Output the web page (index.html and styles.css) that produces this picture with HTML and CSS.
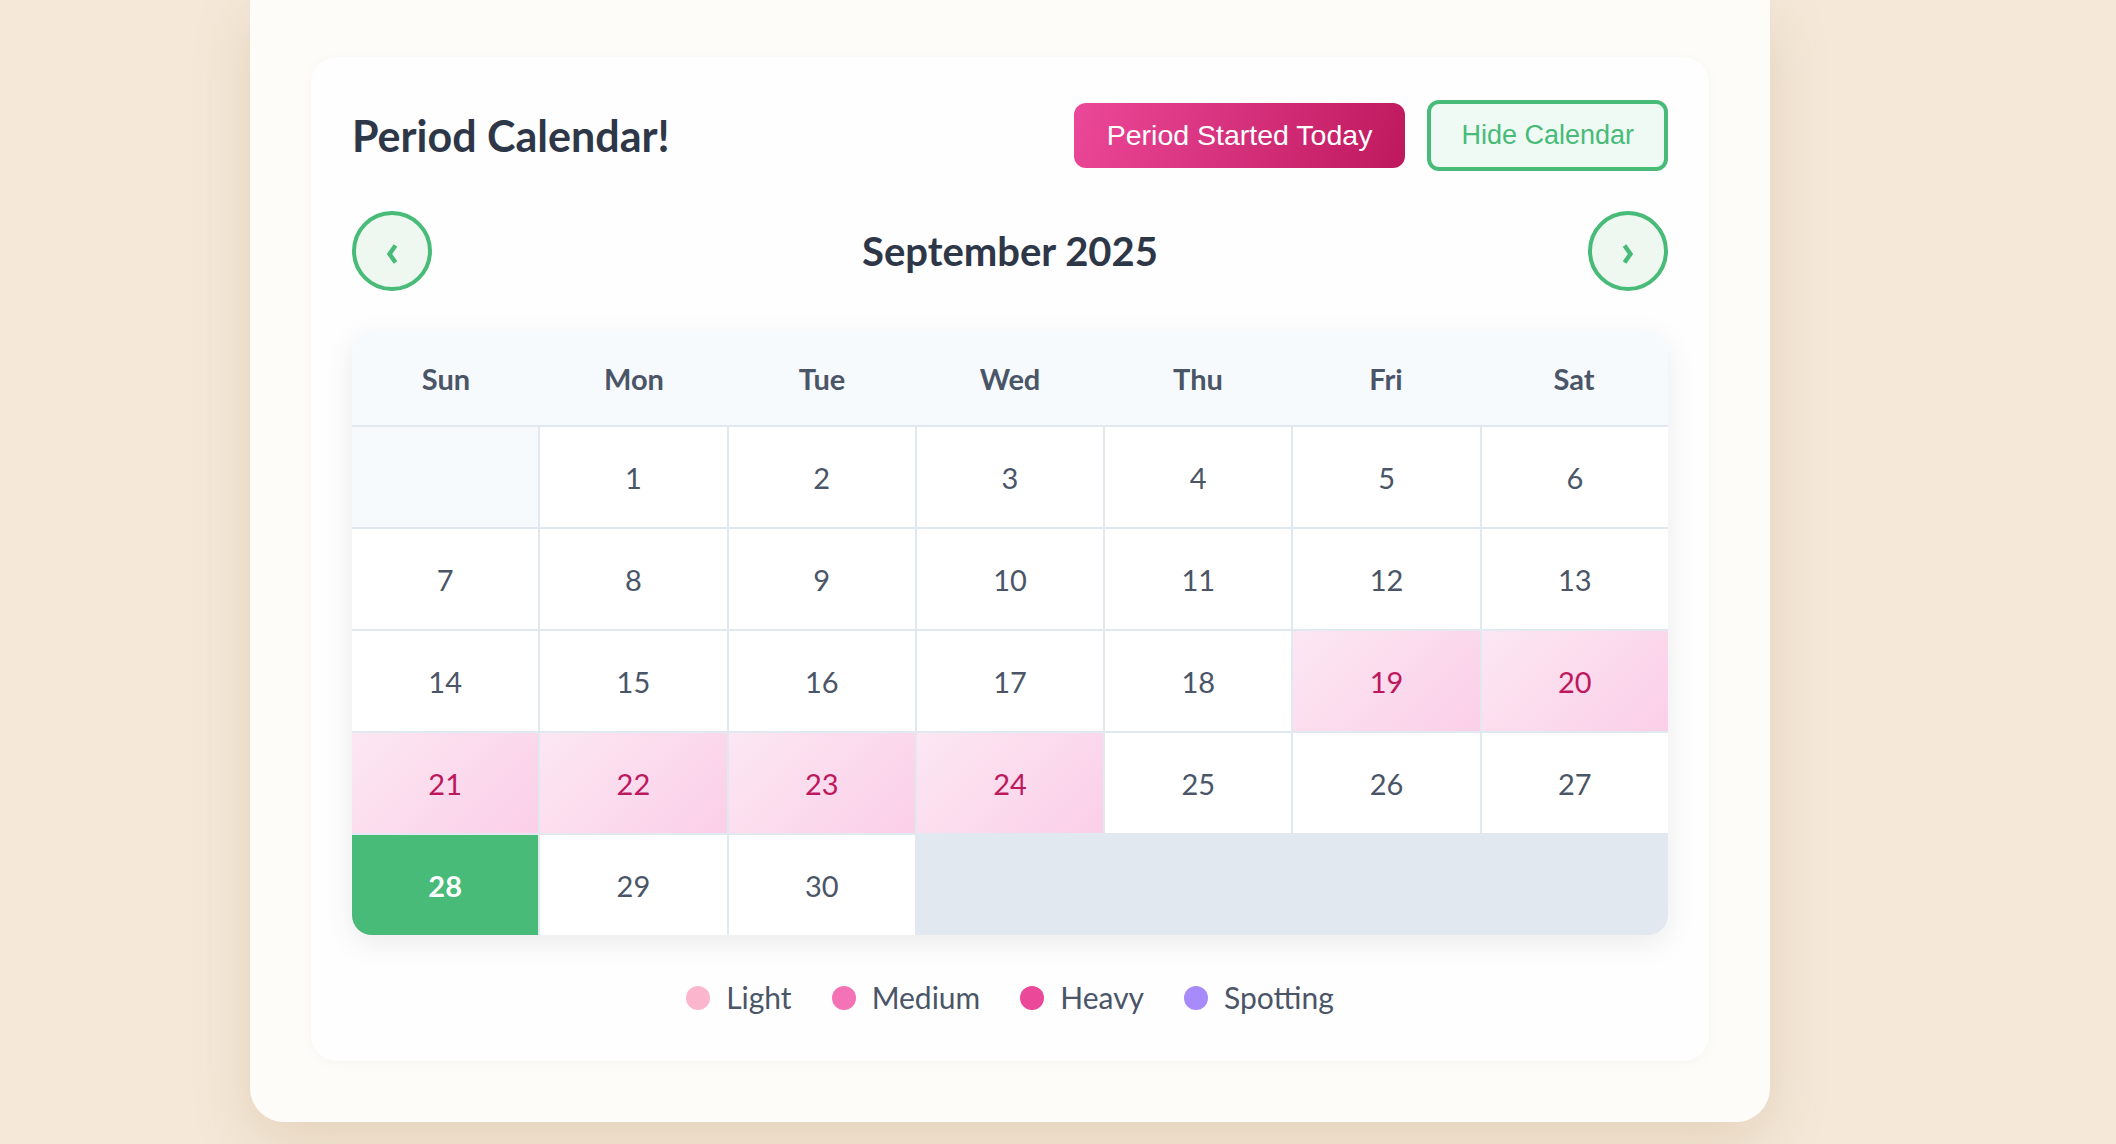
FILE: index.html
```html
<!DOCTYPE html>
<html lang="en">
<head>
<meta charset="utf-8">
<title>Period Calendar</title>
<link rel="stylesheet" href="styles.css">
</head>
<body>
<div class="outer-card">
  <section class="calendar-card">
    <header class="cal-header">
      <h2 class="cal-title">Period Calendar!</h2>
      <div class="cal-actions">
        <button class="btn btn-primary">Period Started Today</button>
        <button class="btn btn-outline">Hide Calendar</button>
      </div>
    </header>

    <div class="month-nav">
      <button class="nav-btn" aria-label="Previous month">
        <svg width="14" height="22" viewBox="0 0 14 22"><path d="M10.5 2.5 L4.5 11 L10.5 19.5" fill="none" stroke="#48bb78" stroke-width="4.4" stroke-linejoin="miter"/></svg>
      </button>
      <h3 class="month-title">September 2025</h3>
      <button class="nav-btn" aria-label="Next month">
        <svg width="14" height="22" viewBox="0 0 14 22"><path d="M3.5 2.5 L9.5 11 L3.5 19.5" fill="none" stroke="#48bb78" stroke-width="4.4" stroke-linejoin="miter"/></svg>
      </button>
    </div>

    <div class="calendar">
      <div class="dow-row">
        <div class="dow">Sun</div>
        <div class="dow">Mon</div>
        <div class="dow">Tue</div>
        <div class="dow">Wed</div>
        <div class="dow">Thu</div>
        <div class="dow">Fri</div>
        <div class="dow">Sat</div>
      </div>
      <div class="days">
        <div class="day empty"></div>
        <div class="day">1</div>
        <div class="day">2</div>
        <div class="day">3</div>
        <div class="day">4</div>
        <div class="day">5</div>
        <div class="day">6</div>
        <div class="day">7</div>
        <div class="day">8</div>
        <div class="day">9</div>
        <div class="day">10</div>
        <div class="day">11</div>
        <div class="day">12</div>
        <div class="day">13</div>
        <div class="day">14</div>
        <div class="day">15</div>
        <div class="day">16</div>
        <div class="day">17</div>
        <div class="day">18</div>
        <div class="day period">19</div>
        <div class="day period">20</div>
        <div class="day period">21</div>
        <div class="day period">22</div>
        <div class="day period">23</div>
        <div class="day period">24</div>
        <div class="day">25</div>
        <div class="day">26</div>
        <div class="day">27</div>
        <div class="day today">28</div>
        <div class="day">29</div>
        <div class="day">30</div>
      </div>
    </div>

    <div class="legend">
      <div class="legend-item"><span class="dot dot-light"></span>Light</div>
      <div class="legend-item"><span class="dot dot-medium"></span>Medium</div>
      <div class="legend-item"><span class="dot dot-heavy"></span>Heavy</div>
      <div class="legend-item"><span class="dot dot-spotting"></span>Spotting</div>
    </div>
  </section>
</div>
</body>
</html>
```

FILE: styles.css
```css
* { box-sizing: border-box; }

html, body {
  margin: 0;
  padding: 0;
}

body {
  background: #f5e8d8;
  font-family: "Lato", "Noto Sans", sans-serif;
  color: #4a5568;
  min-height: 1144px;
  overflow: hidden;
}

.outer-card {
  margin-left: 250px;
  width: 1520px;
  background: #fefcf9;
  border-radius: 0 0 34px 34px;
  padding: 57px 61px 61px;
  box-shadow: 0 20px 60px rgba(150, 110, 60, 0.18);
}

.calendar-card {
  background: #fffefe;
  border-radius: 26px;
  padding: 43px 41px 41px;
  box-shadow: 0 2px 14px rgba(0, 0, 0, 0.03);
}

.cal-header {
  display: flex;
  align-items: center;
  justify-content: space-between;
}

.cal-title {
  margin: 0;
  font-size: 43px;
  font-weight: 700;
  color: #2d3748;
  line-height: 1.2;
}

.cal-actions {
  display: flex;
  align-items: center;
  gap: 22px;
}

.btn {
  font-family: "Liberation Sans", Arial, sans-serif;
  border-radius: 12px;
  line-height: 1.15;
  cursor: pointer;
}

.btn-primary {
  font-size: 28.5px;
  padding: 16px 33px;
  border: none;
  color: #ffffff;
  background: linear-gradient(110deg, #ec4899 0%, #be185d 100%);
}

.btn-outline {
  font-size: 27px;
  padding: 16px 30px;
  border: 4px solid #48bb78;
  color: #48bb78;
  background: #f0faf4;
}

.month-nav {
  margin-top: 40px;
  display: flex;
  align-items: center;
  justify-content: space-between;
}

.nav-btn {
  width: 80px;
  height: 80px;
  border-radius: 50%;
  border: 4px solid #48bb78;
  background: #eef8f1;
  display: flex;
  align-items: center;
  justify-content: center;
  padding: 0;
}

.nav-btn svg {
  margin-top: 5px;
}

.month-title {
  margin: 0;
  font-size: 40px;
  font-weight: 700;
  color: #2d3748;
}

.calendar {
  margin-top: 40px;
  border-radius: 20px;
  overflow: hidden;
  box-shadow: 0 8px 30px rgba(0, 0, 0, 0.08);
}

.dow-row {
  display: grid;
  grid-template-columns: repeat(7, 1fr);
  background: #f7fafc;
  border-bottom: 2px solid #e2e8f0;
  height: 96px;
}

.dow {
  display: flex;
  align-items: center;
  justify-content: center;
  font-size: 29px;
  font-weight: 700;
  color: #4a5568;
}

.days {
  display: grid;
  grid-template-columns: repeat(7, 1fr);
  grid-auto-rows: 100px;
  gap: 2px;
  background: #e2e8f0;
}

.day {
  background: #ffffff;
  display: flex;
  align-items: center;
  justify-content: center;
  font-size: 29px;
  color: #4a5568;
}

.day.empty {
  background: #f7fafc;
}

.day.period {
  background: linear-gradient(135deg, #fce7f3 0%, #fbcfe8 100%);
  color: #be185d;
}

.day.today {
  background: #48bb78;
  color: #ffffff;
  font-weight: 700;
}

.legend {
  margin-top: 40px;
  display: flex;
  justify-content: center;
  align-items: center;
  gap: 40px;
  font-size: 30px;
  line-height: 45px;
  color: #4a5568;
}

.legend-item {
  display: flex;
  align-items: center;
  gap: 16px;
}

.dot {
  width: 24px;
  height: 24px;
  border-radius: 50%;
  display: inline-block;
}

.dot-light { background: #fbb6ce; }
.dot-medium { background: #f472b6; }
.dot-heavy { background: #ec4899; }
.dot-spotting { background: #a78bfa; }
```
